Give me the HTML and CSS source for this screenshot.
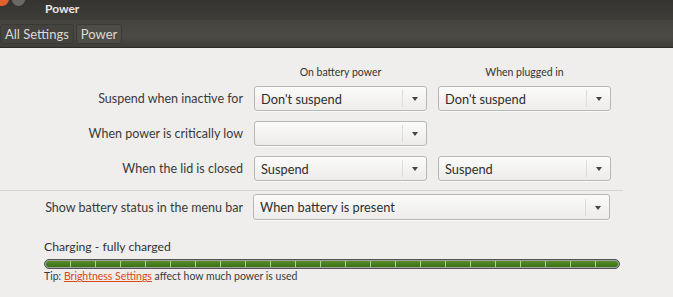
FILE: index.html
```html
<!DOCTYPE html>
<html lang="en">
<head>
    <meta charset="UTF-8">
    <title>Power</title>
    <link rel="stylesheet" href="styles.css">
</head>
<body>
    <div class="titlebar">
        <span class="btn-close"></span>
        <span class="btn-min"></span>
        <span class="title">Power</span>
    </div>
    <div class="toolbar">
        <button class="crumb">All Settings</button>
        <button class="crumb active">Power</button>
    </div>

    <div class="content">
        <div class="form">
            <div></div>
            <div class="colhead">On battery power</div>
            <div class="colhead">When plugged in</div>

            <div class="label">Suspend when inactive for</div>
            <div class="combo"><span>Don't suspend</span><i></i></div>
            <div class="combo"><span>Don't suspend</span><i></i></div>

            <div class="label">When power is critically low</div>
            <div class="combo"><span></span><i></i></div>
            <div></div>

            <div class="label">When the lid is closed</div>
            <div class="combo"><span>Suspend</span><i></i></div>
            <div class="combo"><span>Suspend</span><i></i></div>
        </div>

        <div class="separator"></div>

        <div class="form wide">
            <div class="label">Show battery status in the menu bar</div>
            <div class="combo"><span>When battery is present</span><i></i></div>
        </div>

        <div class="battery">
            <div class="status">Charging - fully charged</div>
            <div class="level"><div class="fill"></div></div>
            <div class="tip">Tip: <a href="#">Brightness Settings</a> affect how much power is used</div>
        </div>
    </div>
</body>
</html>
```

FILE: styles.css
```css
:root {
    --bg: #efeeec;
    --dark: #3c3b37;
    --text: #3c3c3c;
    --border: #b9b7b1;
}

* {
    box-sizing: border-box;
}

body {
    margin: 0;
    background: var(--bg);
    font-family: Lato, "Open Sans", sans-serif;
    color: var(--text);
    overflow: hidden;
}

.titlebar {
    height: 20px;
    background: linear-gradient(#34332f, #3e3d39);
    display: flex;
    align-items: flex-start;
    gap: 3px;
}

.btn-close,
.btn-min {
    width: 13px;
    height: 7px;
    border-radius: 0 0 7px 7px;
    margin-top: -1px;
}

.btn-close {
    background: #e0602a;
    width: 9px;
    border-radius: 0 0 7px 0;
}

.btn-min {
    background: #6a6965;
}

.title {
    color: #e8e7e3;
    font-weight: bold;
    font-size: 12px;
    line-height: 12px;
    margin-left: 17px;
    margin-top: 3px;
}

.toolbar {
    height: 28px;
    background: linear-gradient(#45443f, #4b4a45 60%, #3f3e3a);
    border-bottom: 1px solid #2d2c29;
    display: flex;
    align-items: center;
    gap: 2px;
}

.crumb {
    font-family: inherit;
    font-size: 13px;
    color: #dcdbd6;
    background: #44433e;
    border: 1px solid #3a3935;
    border-radius: 3px;
    height: 20px;
    padding: 0 4px;
    line-height: 18px;
}

.crumb.active {
    background: #4d4c47;
}

.content {
    padding-top: 18px;
}

.form {
    display: grid;
    grid-template-columns: 243px 173px 173px;
    column-gap: 11px;
    row-gap: 10px;
    align-items: center;
}

.colhead {
    font-size: 10.5px;
    text-align: center;
    color: #333;
    height: 13px;
    line-height: 13px;
    margin-bottom: -3px;
}

.label {
    text-align: right;
    font-size: 12.5px;
    color: #3a3a3a;
}

.combo {
    height: 25px;
    display: flex;
    align-items: center;
    border: 1px solid var(--border);
    border-radius: 3px;
    background: linear-gradient(#fbfbfa, #edecea);
    box-shadow: 0 1px 0 rgba(255, 255, 255, 0.7);
    font-size: 12.8px;
    color: #2e2e2e;
}

.combo span {
    flex: 1;
    padding-left: 6px;
    white-space: nowrap;
}

.combo i {
    width: 24px;
    height: 17px;
    border-left: 1px solid #dedcd8;
    position: relative;
}

.combo i::after {
    content: "";
    position: absolute;
    left: 9px;
    top: 7px;
    border-left: 3.5px solid transparent;
    border-right: 3.5px solid transparent;
    border-top: 4px solid #444;
}

.separator {
    height: 1px;
    background: #d6d4cf;
    margin: 9px 50px 3px 0;
}

.form.wide {
    grid-template-columns: 243px 357px;
    column-gap: 10px;
}

.form.wide .combo {
    height: 26px;
}

.battery {
    padding: 20px 53px 0 44px;
}

.status {
    font-size: 12.2px;
    color: #333;
    line-height: 14px;
}

.level {
    margin-top: 5px;
    height: 10px;
    border: 1px solid #555;
    border-radius: 5px;
    background: #a2a29e;
    padding: 1px;
}

.fill {
    height: 100%;
    border-radius: 3px;
    background:
        repeating-linear-gradient(90deg, transparent 0 24px, rgba(200, 230, 180, 0.8) 24px 25px),
        linear-gradient(#578c2a, #3a7316);
}

.tip {
    margin-top: 1px;
    font-size: 10.5px;
    color: #3a3a3a;
}

.tip a {
    color: #dd4814;
}
```
